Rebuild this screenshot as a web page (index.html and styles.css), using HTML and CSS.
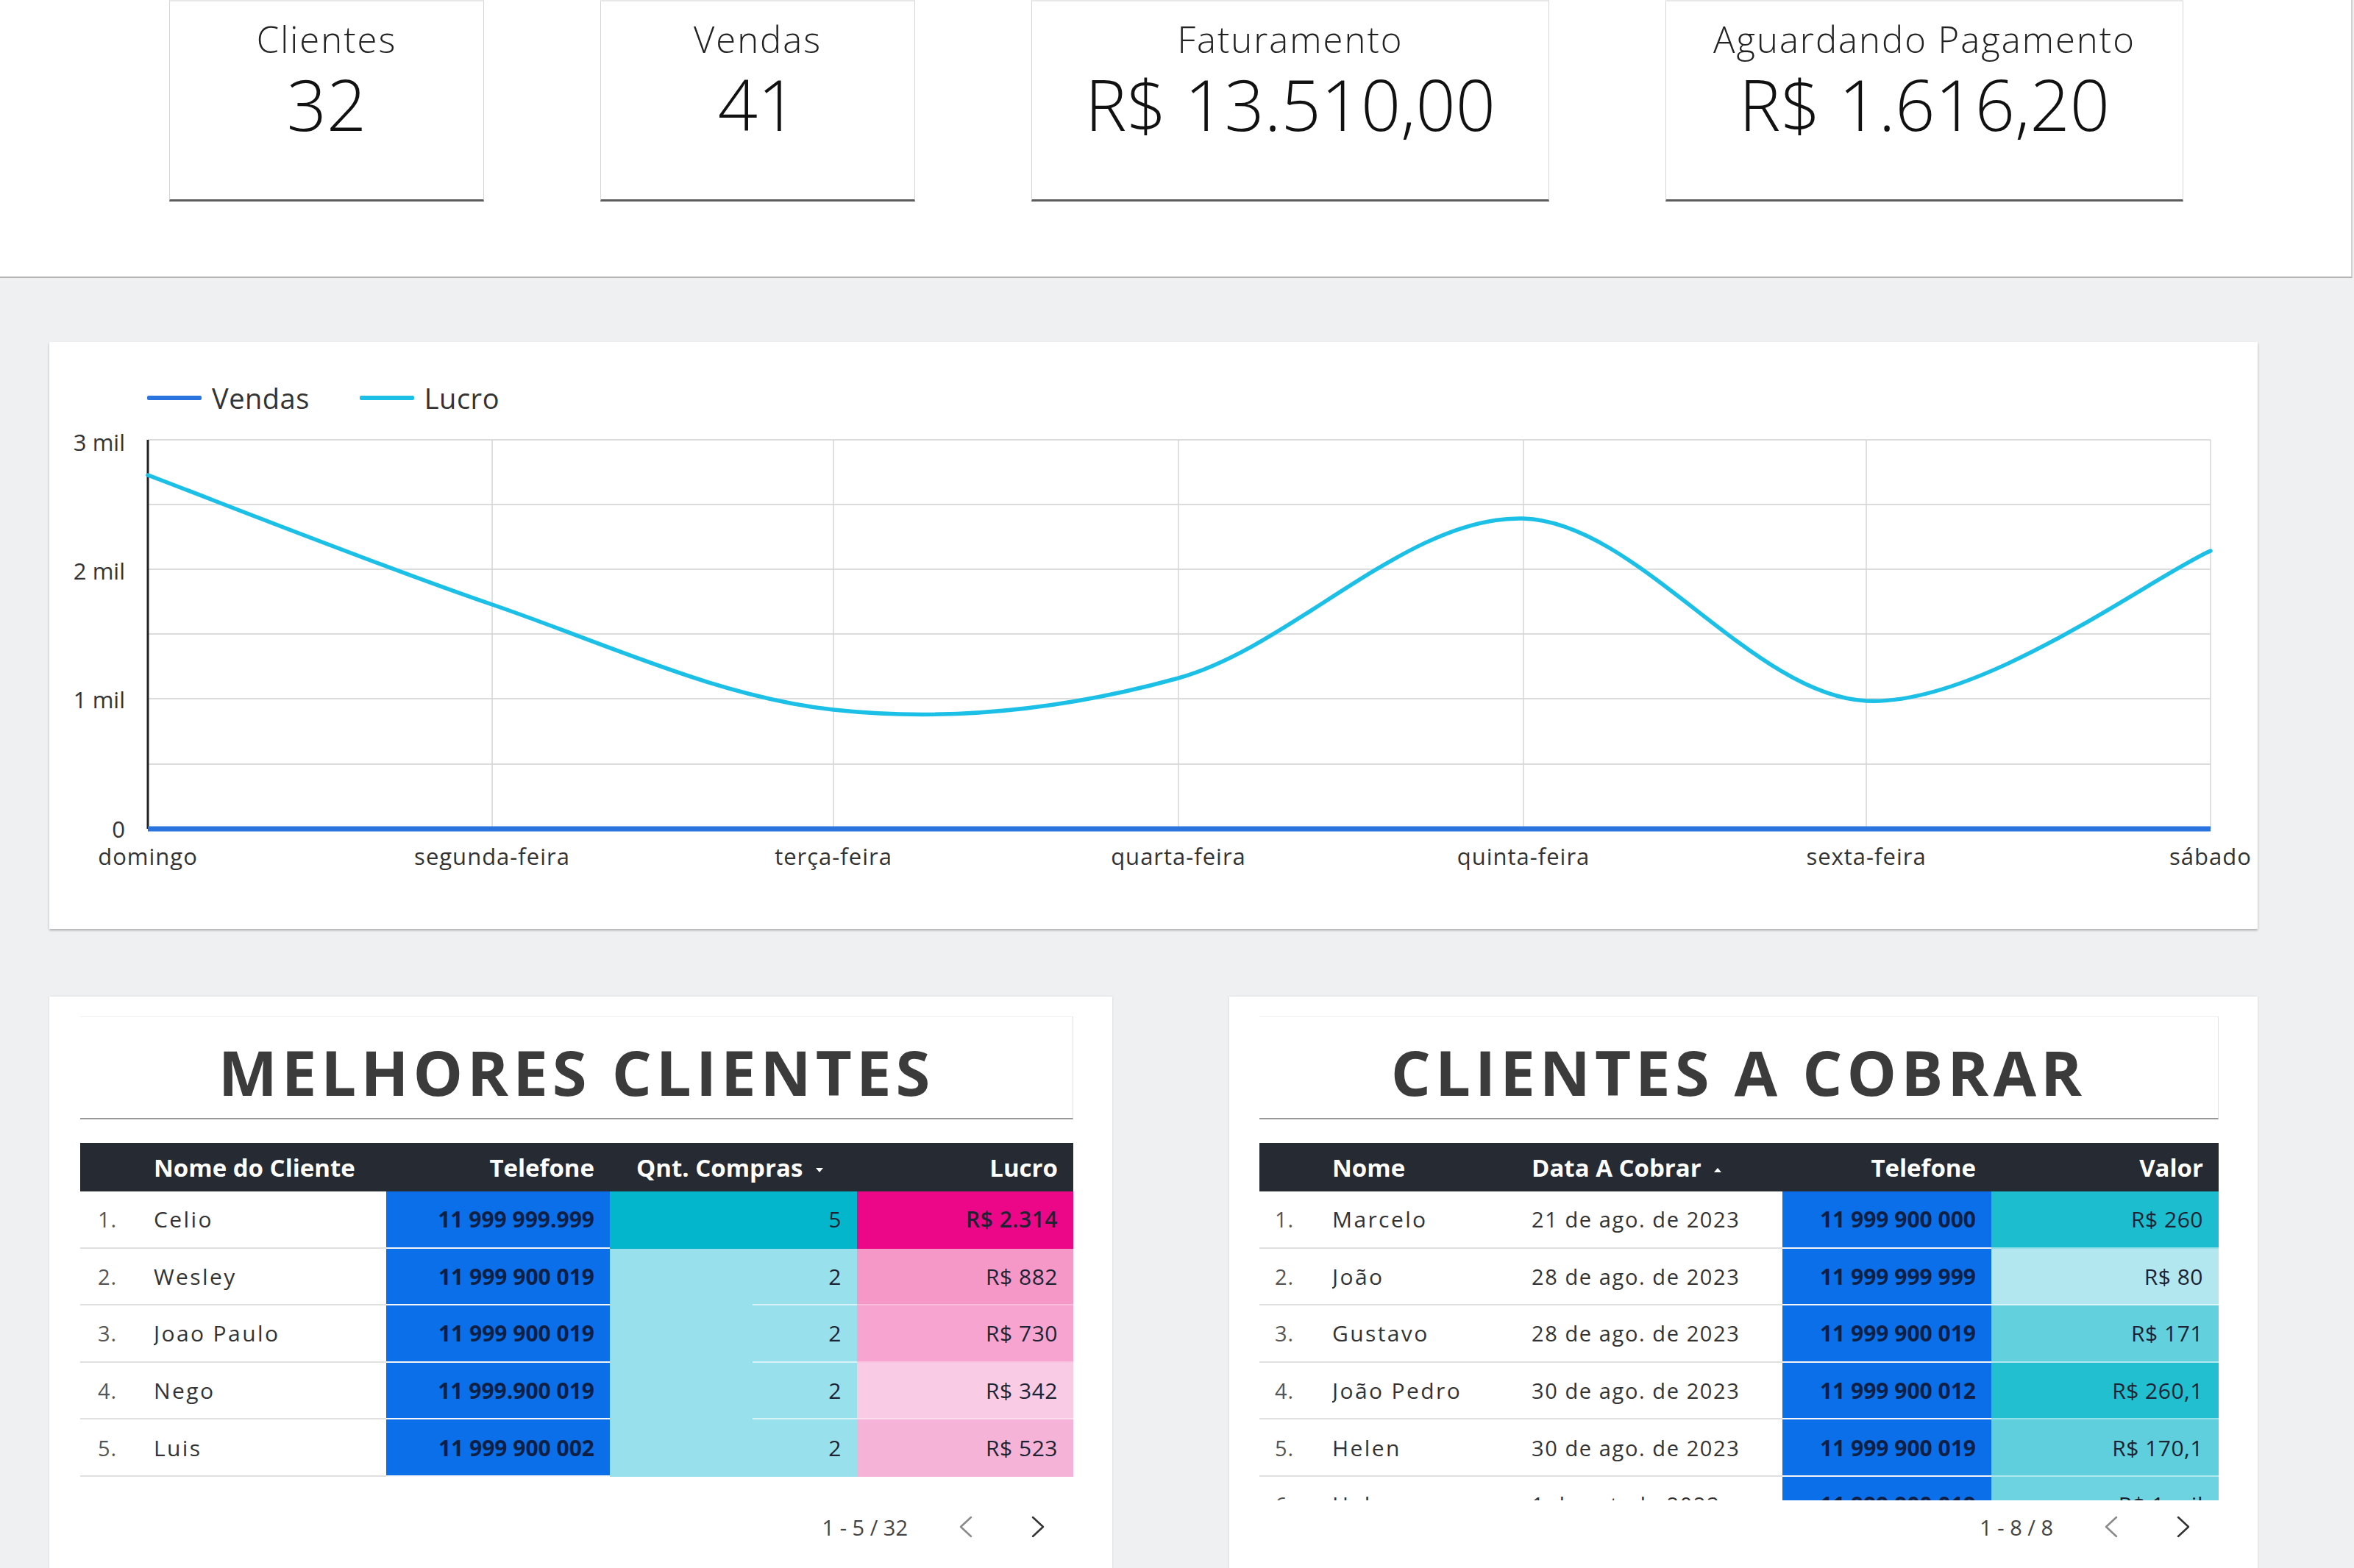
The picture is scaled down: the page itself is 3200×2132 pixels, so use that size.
FILE: index.html
```html
<!DOCTYPE html>
<html lang="pt-BR">
<head>
<meta charset="utf-8">
<title>Dashboard de Vendas</title>
<link rel="stylesheet" href="styles.css">
</head>
<body>
<div class="page">
  <header class="kpi-band">
    <div class="kpi-row">
      <div class="kpi kpi-sm">
        <div class="kpi-label">Clientes</div>
        <div class="kpi-value">32</div>
      </div>
      <div class="kpi kpi-sm">
        <div class="kpi-label">Vendas</div>
        <div class="kpi-value">41</div>
      </div>
      <div class="kpi kpi-lg">
        <div class="kpi-label">Faturamento</div>
        <div class="kpi-value">R$ 13.510,00</div>
      </div>
      <div class="kpi kpi-lg">
        <div class="kpi-label">Aguardando Pagamento</div>
        <div class="kpi-value">R$ 1.616,20</div>
      </div>
    </div>
  </header>

  <main class="content">
    <section class="chart-card">
      <div class="legend">
        <div class="legend-item"><span class="legend-line vendas"></span><span class="legend-text">Vendas</span></div>
        <div class="legend-item"><span class="legend-line lucro"></span><span class="legend-text">Lucro</span></div>
      </div>
      <svg class="chart" width="3002" height="620" viewBox="0 0 3002 620">
        <g class="grid-h">
          <line x1="134" y1="23" x2="2938" y2="23"/>
          <line x1="134" y1="111" x2="2938" y2="111"/>
          <line x1="134" y1="199" x2="2938" y2="199"/>
          <line x1="134" y1="287" x2="2938" y2="287"/>
          <line x1="134" y1="375" x2="2938" y2="375"/>
          <line x1="134" y1="464" x2="2938" y2="464"/>
        </g>
        <g class="grid-v">
          <line x1="602" y1="23" x2="602" y2="552"/>
          <line x1="1066" y1="23" x2="1066" y2="552"/>
          <line x1="1535" y1="23" x2="1535" y2="552"/>
          <line x1="2004" y1="23" x2="2004" y2="552"/>
          <line x1="2470" y1="23" x2="2470" y2="552"/>
          <line x1="2938" y1="23" x2="2938" y2="552"/>
        </g>
        <line class="axis-y" x1="134" y1="23" x2="134" y2="552"/>
        <line class="series-vendas" x1="134" y1="552" x2="2938" y2="552"/>
        <path class="series-lucro" d="M134 71 C212 100.3 446.7 193.8 602 247 C757.3 300.2 910.5 373.3 1066 390 C1221.5 406.7 1378.7 390.3 1535 347 C1691.3 303.7 1848.2 124.8 2004 130 C2159.8 135.2 2314.3 370.7 2470 378 C2625.7 385.3 2860 208 2938 174"/>
        <g class="y-labels">
          <text x="103" y="38">3 mil</text>
          <text x="103" y="213">2 mil</text>
          <text x="103" y="388">1 mil</text>
          <text x="103" y="564">0</text>
        </g>
        <g class="x-labels">
          <text x="134" y="601">domingo</text>
          <text x="602" y="601">segunda-feira</text>
          <text x="1066" y="601">terça-feira</text>
          <text x="1535" y="601">quarta-feira</text>
          <text x="2004" y="601">quinta-feira</text>
          <text x="2470" y="601">sexta-feira</text>
          <text x="2938" y="601">sábado</text>
        </g>
      </svg>
    </section>

    <div class="tables">
      <section class="table-card card-left">
        <div class="title-box"><h2>MELHORES CLIENTES</h2></div>
        <div class="table-wrap">
          <table class="data">
            <colgroup><col class="w100"><col class="w316"><col class="w304"><col class="w336"><col class="w294"></colgroup>
            <thead>
              <tr>
                <th></th>
                <th class="left">Nome do Cliente</th>
                <th class="right">Telefone</th>
                <th class="left qnt-head">Qnt. Compras <svg class="sort" width="12" height="8" viewBox="0 0 12 8"><path d="M1 1 L11 1 L6 7 Z" fill="#fff"/></svg></th>
                <th class="right">Lucro</th>
              </tr>
            </thead>
            <tbody>
              <tr><td class="idx">1.</td><td class="name">Celio</td><td class="tel">11 999 999.999</td><td class="num q-strong">5</td><td class="num l1">R$ 2.314</td></tr>
              <tr><td class="idx">2.</td><td class="name">Wesley</td><td class="tel">11 999 900 019</td><td class="num q-light first">2</td><td class="num l2">R$ 882</td></tr>
              <tr><td class="idx">3.</td><td class="name">Joao Paulo</td><td class="tel">11 999 900 019</td><td class="num q-light">2</td><td class="num l3">R$ 730</td></tr>
              <tr><td class="idx">4.</td><td class="name">Nego</td><td class="tel">11 999.900 019</td><td class="num q-light">2</td><td class="num l4">R$ 342</td></tr>
              <tr><td class="idx">5.</td><td class="name">Luis</td><td class="tel">11 999 900 002</td><td class="num q-light last">2</td><td class="num l5">R$ 523</td></tr>
            </tbody>
          </table>
        </div>
        <div class="pager">
          <span class="pager-text">1 - 5 / 32</span>
          <svg class="chev prev" width="20" height="30" viewBox="0 0 20 30"><path d="M17 2 L3 15 L17 28"/></svg>
          <svg class="chev next" width="20" height="30" viewBox="0 0 20 30"><path d="M3 2 L17 15 L3 28"/></svg>
        </div>
      </section>

      <section class="table-card card-right">
        <div class="title-box"><h2>CLIENTES A COBRAR</h2></div>
        <div class="table-wrap">
          <table class="data">
            <colgroup><col class="w99"><col class="w271"><col class="w341"><col class="w284"><col class="w309"></colgroup>
            <thead>
              <tr>
                <th></th>
                <th class="left">Nome</th>
                <th class="left data-head">Data A Cobrar <svg class="sort" width="12" height="8" viewBox="0 0 12 8"><path d="M1 7 L11 7 L6 1 Z" fill="#fff"/></svg></th>
                <th class="right">Telefone</th>
                <th class="right">Valor</th>
              </tr>
            </thead>
            <tbody>
              <tr><td class="idx">1.</td><td class="name">Marcelo</td><td class="date">21 de ago. de 2023</td><td class="tel">11 999 900 000</td><td class="num v1">R$ 260</td></tr>
              <tr><td class="idx">2.</td><td class="name">João</td><td class="date">28 de ago. de 2023</td><td class="tel">11 999 999 999</td><td class="num v2">R$ 80</td></tr>
              <tr><td class="idx">3.</td><td class="name">Gustavo</td><td class="date">28 de ago. de 2023</td><td class="tel">11 999 900 019</td><td class="num v3">R$ 171</td></tr>
              <tr><td class="idx">4.</td><td class="name">João Pedro</td><td class="date">30 de ago. de 2023</td><td class="tel">11 999 900 012</td><td class="num v4">R$ 260,1</td></tr>
              <tr><td class="idx">5.</td><td class="name">Helen</td><td class="date">30 de ago. de 2023</td><td class="tel">11 999 900 019</td><td class="num v5">R$ 170,1</td></tr>
              <tr><td class="idx">6.</td><td class="name">Helena</td><td class="date">1 de set. de 2023</td><td class="tel">11 999 900 019</td><td class="num v6">R$ 1 mil</td></tr>
            </tbody>
          </table>
        </div>
        <div class="pager">
          <span class="pager-text">1 - 8 / 8</span>
          <svg class="chev prev" width="20" height="30" viewBox="0 0 20 30"><path d="M17 2 L3 15 L17 28"/></svg>
          <svg class="chev next" width="20" height="30" viewBox="0 0 20 30"><path d="M3 2 L17 15 L3 28"/></svg>
        </div>
      </section>
    </div>
  </main>
</div>
</body>
</html>
```

FILE: styles.css
```css
* { box-sizing: border-box; }

html, body {
  margin: 0;
  padding: 0;
}

body {
  width: 3200px;
  background: #eef0f2;
  font-family: "Open Sans", "Liberation Sans", sans-serif;
  color: #333;
  overflow: hidden;
}

.page {
  width: 3200px;
  min-height: 2132px;
}

/* ---------- KPI band ---------- */
.kpi-band {
  width: 3198px;
  height: 378px;
  background: #fff;
  border-bottom: 2px solid #b3b3b3;
  border-right: 2px solid #cfcfcf;
}

.kpi-row {
  display: flex;
  gap: 158px;
  padding-left: 230px;
}

.kpi {
  height: 274px;
  background: #fff;
  border: 1px solid #d6d6d6;
  border-top: 2px solid #e8e8e8;
  border-bottom: 3px solid #5c5c5c;
  text-align: center;
  padding-top: 21px;
  color: #111;
}

.kpi-sm { width: 428px; }
.kpi-lg { width: 704px; }

.kpi-label {
  font-size: 49px;
  font-weight: 300;
  line-height: 60px;
  letter-spacing: 2px;
  color: #222;
}

.kpi-value {
  margin-top: 6px;
  font-size: 95px;
  font-weight: 300;
  line-height: 104px;
  color: #111;
}

/* ---------- content ---------- */
.content {
  padding: 87px 0 0 67px;
}

.chart-card {
  width: 3002px;
  height: 798px;
  background: #fff;
  box-shadow: 0 2px 3px rgba(0, 0, 0, 0.28);
}

.legend {
  display: flex;
  gap: 68px;
  height: 110px;
  padding: 51px 0 0 133px;
}

.legend-item {
  display: flex;
  align-items: center;
  gap: 14px;
  height: 50px;
}

.legend-line {
  display: block;
  width: 74px;
  height: 6px;
  border-radius: 2px;
}

.legend-line.vendas { background: #2b74e0; }
.legend-line.lucro { background: #1cc0e6; }

.legend-text {
  font-size: 38px;
  line-height: 50px;
  letter-spacing: 0.5px;
  color: #333;
}

.chart { display: block; }

.grid-h line { stroke: #dcdcdc; stroke-width: 2; }
.grid-v line { stroke: #d6d6d6; stroke-width: 1.5; }
.axis-y { stroke: #222; stroke-width: 3; }
.series-vendas { stroke: #2b74e0; stroke-width: 7; }
.series-lucro { fill: none; stroke: #1cc0e6; stroke-width: 5.5; stroke-linecap: round; }

.y-labels text {
  font-family: "Open Sans", "Liberation Sans", sans-serif;
  font-size: 31px;
  fill: #333;
  text-anchor: end;
}

.x-labels text {
  font-family: "Open Sans", "Liberation Sans", sans-serif;
  font-size: 31px;
  letter-spacing: 1px;
  fill: #333;
  text-anchor: middle;
}

/* ---------- tables ---------- */
.tables {
  display: flex;
  gap: 159px;
  margin-top: 92px;
}

.table-card {
  background: #fff;
  min-height: 820px;
  padding: 27px 53px 0 42px;
  box-shadow: 0 0 3px rgba(0, 0, 0, 0.12);
}

.card-left { width: 1445px; }
.card-right { width: 1398px; padding-left: 41px; }

.title-box {
  border-top: 1px solid #eeeeee;
  border-right: 1px solid #e2e2e2;
  border-bottom: 2px solid #979797;
  padding: 32px 0 20px;
  text-align: center;
}

.title-box h2 {
  margin: 0;
  font-size: 85px;
  line-height: 85px;
  font-weight: 700;
  letter-spacing: 6px;
  color: #3b3b3b;
}

.table-wrap {
  margin-top: 32px;
  height: 486px;
  overflow: hidden;
}

.data {
  width: 100%;
  table-layout: fixed;
  border-collapse: separate;
  border-spacing: 0;
}

.w100 { width: 100px; }
.w316 { width: 316px; }
.w304 { width: 304px; }
.w336 { width: 336px; }
.w294 { width: 294px; }
.w99 { width: 99px; }
.w271 { width: 271px; }
.w341 { width: 341px; }
.w284 { width: 284px; }
.w309 { width: 309px; }

.data th {
  height: 66px;
  background: #262b33;
  color: #fff;
  font-size: 33px;
  font-weight: 700;
  padding: 0 21px;
  white-space: nowrap;
}

.data th.left { text-align: left; padding-left: 0; }
.data th.right { text-align: right; }
.data th.qnt-head { padding-left: 36px; }

.sort { margin-left: 8px; vertical-align: middle; }

.data td {
  height: 77.6px;
  border-bottom: 2px solid #e0e0e0;
  font-size: 29px;
  padding: 0 21px;
  white-space: nowrap;
  overflow: hidden;
}

.data td.idx {
  padding-left: 24px;
  color: #555;
  letter-spacing: 1px;
}

.card-right .data td.idx { padding-left: 21px; }

.data td.name {
  padding-left: 0;
  font-size: 30px;
  letter-spacing: 2.4px;
  color: #333;
}

.data td.date {
  padding-left: 0;
  letter-spacing: 1.6px;
  color: #333;
}

.data td.tel {
  background: #0a6fe9;
  border-bottom-color: #f3f5f7;
  text-align: right;
  font-size: 30px;
  font-weight: 700;
  color: #0d1f45;
}

.data td.num {
  text-align: right;
  font-size: 30px;
  color: #1c2433;
  letter-spacing: 0.5px;
}

.q-strong { background-color: #04b6cc; border-bottom-color: transparent !important; }
.q-light {
  background-color: #98e0eb;
  border-bottom-color: transparent !important;
  background-image: linear-gradient(#d8f3f7, #d8f3f7);
  background-size: 142px 2px;
  background-position: right bottom;
  background-repeat: no-repeat;
  background-origin: border-box;
}
.q-light.last { background-image: none; }

.l1 { background: #ec0789; border-bottom-color: transparent !important; font-weight: 600; }
.l2 { background: #f598c8; border-bottom-color: rgba(255, 255, 255, 0.35) !important; }
.l3 { background: #f7a5d0; border-bottom-color: rgba(255, 255, 255, 0.35) !important; }
.l4 { background: #f9cbe5; border-bottom-color: rgba(255, 255, 255, 0.35) !important; }
.l5 { background: #f6b3d8; border-bottom-color: transparent !important; }

.v1 { background: #1dbdd0; border-bottom-color: rgba(255, 255, 255, 0.5) !important; }
.v2 { background: #b3e7f0; border-bottom-color: rgba(255, 255, 255, 0.5) !important; }
.v3 { background: #63d0de; border-bottom-color: rgba(255, 255, 255, 0.5) !important; }
.v4 { background: #22bfd0; border-bottom-color: rgba(255, 255, 255, 0.5) !important; }
.v5 { background: #5fcfdd; border-bottom-color: rgba(255, 255, 255, 0.5) !important; }
.v6 { background: #6dd3e0; }

/* ---------- pager ---------- */
.pager {
  display: flex;
  justify-content: flex-end;
  align-items: center;
  height: 72px;
  padding-right: 38px;
}

.pager-text {
  font-size: 29px;
  letter-spacing: 0;
  color: #444;
  margin-right: 69px;
}

.chev path { fill: none; stroke-width: 2.5; stroke-linecap: round; stroke-linejoin: round; }
.chev.prev path { stroke: #8a8a8a; }
.chev.next path { stroke: #333; }
.chev.prev { margin-right: 78px; }
```
